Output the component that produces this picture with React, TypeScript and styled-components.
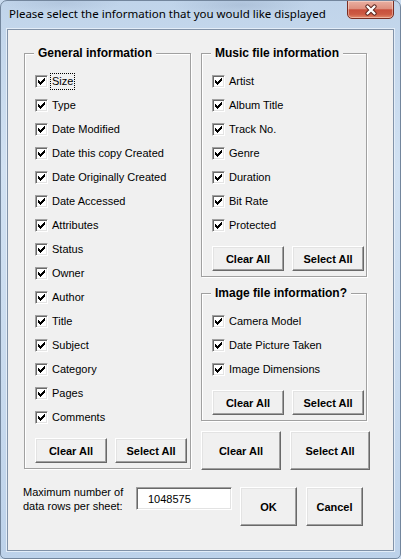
import React from "react";
import styled, { createGlobalStyle } from "styled-components";

const GlobalStyle = createGlobalStyle`
  html, body { margin: 0; padding: 0; }
  body { background: #c9dbef; width: 401px; height: 559px; overflow: hidden; }
  *, *::before, *::after { box-sizing: border-box; }
`;

const Window = styled.div`
  width: 401px;
  height: 559px;
  display: flex;
  flex-direction: column;
  padding: 0 6px 7px 6px;
  border: 1px solid #73869d;
  border-radius: 7px 7px 5px 5px;
  background:
    radial-gradient(ellipse 70px 12px at 240px 4px, rgba(140, 160, 188, 0.35), transparent),
    radial-gradient(ellipse 60px 10px at 60px 2px, rgba(140, 160, 188, 0.25), transparent),
    linear-gradient(180deg, #c0d4ea 0%, #d1e1f2 30%, #c8daee 70%, #bdd2ea 100%);
  font-family: "Liberation Sans", Arial, sans-serif;
  color: #000;
  overflow: hidden;
`;

const TitleBar = styled.div`
  height: 28px;
  display: flex;
  align-items: flex-start;
  justify-content: space-between;
`;

const TitleText = styled.div`
  font-family: "Noto Sans", "Liberation Sans", sans-serif;
  font-size: 11.5px;
  line-height: 16px;
  padding: 5px 0 0 2px;
  white-space: nowrap;
`;

const CloseButton = styled.div`
  width: 47px;
  height: 19px;
  margin-top: -1px;
  border: 1px solid #7a2d22;
  border-radius: 0 0 5px 5px;
  background: linear-gradient(180deg, #eab0a2 0%, #de907f 45%, #c84f3c 52%, #cc5a43 78%, #e38a6c 100%);
  box-shadow: inset 0 0 0 1px rgba(255, 235, 225, 0.45);
  display: flex;
  align-items: center;
  justify-content: center;
`;

const Client = styled.div`
  flex: 1;
  background: #f0f0f0;
  border: 1px solid #8293a9;
  box-shadow: 0 0 0 1px #e3edf8;
  padding: 16px 0 0 16px;
  display: flex;
  flex-direction: column;
`;

const Columns = styled.div`
  display: grid;
  grid-template-columns: 167px 166px;
  column-gap: 10px;
  align-items: start;
`;

const RightColumn = styled.div`
  display: flex;
  flex-direction: column;
`;

const Group = styled.fieldset<{ $gapTop?: number }>`
  margin: ${(p) => p.$gapTop ?? 0}px 0 0 0;
  min-width: 0;
  padding: 9px 2px 5px 10px;
  border: 1px solid #a0a0a0;
  box-shadow: inset 1px 1px 0 #ffffff, 1px 1px 0 #ffffff;
`;

const Legend = styled.legend`
  padding: 0 4px;
  margin-left: -1px;
  font-size: 12px;
  font-weight: bold;
  line-height: 14px;
  background: #f0f0f0;
`;

const Row = styled.div`
  height: 24px;
  display: flex;
  align-items: center;
  gap: 2px;
  font-size: 11px;
`;

const Box = styled.span`
  width: 13px;
  height: 13px;
  flex: none;
  background: #fff;
  border: 1px solid;
  border-color: #a0a0a0 #ffffff #ffffff #a0a0a0;
  box-shadow: inset 1px 1px 0 #696969, inset -1px -1px 0 #e3e3e3;
  display: flex;
  align-items: center;
  justify-content: center;
`;

const LabelText = styled.span<{ $focused?: boolean }>`
  padding: 1px 1px;
  line-height: 13px;
  border: 1px ${(p) => (p.$focused ? "dotted #000" : "solid transparent")};
  white-space: nowrap;
`;

const ButtonRow = styled.div<{ $gap: number; $top: number }>`
  display: flex;
  gap: ${(p) => p.$gap}px;
  margin-top: ${(p) => p.$top}px;
`;

const PushButton = styled.div<{ $w: number; $h: number }>`
  width: ${(p) => p.$w}px;
  height: ${(p) => p.$h}px;
  flex: none;
  background: #f0f0f0;
  border: 1px solid;
  border-color: #ffffff #696969 #696969 #ffffff;
  box-shadow: inset -1px -1px 0 #a0a0a0, inset 1px 1px 0 #e3e3e3;
  display: flex;
  align-items: center;
  justify-content: center;
  font-size: 11px;
  font-weight: bold;
  white-space: nowrap;
`;

const Footer = styled.div`
  display: flex;
  align-items: flex-start;
  margin: 17px 0 0 -1px;
`;

const FooterLabel = styled.div`
  width: 113px;
  flex: none;
  font-size: 11px;
  line-height: 14px;
  margin-top: -2px;
`;

const NumberField = styled.div`
  width: 96px;
  height: 23px;
  flex: none;
  margin-right: 8px;
  background: #fff;
  border: 1px solid;
  border-color: #a0a0a0 #ffffff #ffffff #a0a0a0;
  box-shadow: inset 1px 1px 0 #696969, inset -1px -1px 0 #e3e3e3;
  padding: 0 0 0 11px;
  display: flex;
  align-items: center;
  font-size: 11px;
`;

const CheckMark = () => (
  <svg width="7" height="7" viewBox="0 0 7 7" shapeRendering="crispEdges">
    <path
      d="M6 0h1v3h-1v1h-1v1h-1v1h-1v1h-1v-1h-1v-1h-1v-3h1v1h1v1h1v-1h1v-1h1v-1h1z"
      fill="#000"
    />
  </svg>
);

const CloseGlyph = () => (
  <svg width="14" height="12" viewBox="0 0 14 12">
    <path d="M3.5 2.5 L10.5 9.5 M10.5 2.5 L3.5 9.5" stroke="#5a221a" strokeWidth="4.2" strokeLinecap="round" fill="none" />
    <path d="M3.5 2.5 L10.5 9.5 M10.5 2.5 L3.5 9.5" stroke="#ffffff" strokeWidth="2.4" strokeLinecap="round" fill="none" />
  </svg>
);

type CheckProps = { label: string; focused?: boolean };

const CheckRow = ({ label, focused }: CheckProps) => (
  <Row>
    <Box>
      <CheckMark />
    </Box>
    <LabelText $focused={focused}>{label}</LabelText>
  </Row>
);

const general = [
  "Size",
  "Type",
  "Date Modified",
  "Date this copy Created",
  "Date Originally Created",
  "Date Accessed",
  "Attributes",
  "Status",
  "Owner",
  "Author",
  "Title",
  "Subject",
  "Category",
  "Pages",
  "Comments",
];

const music = ["Artist", "Album Title", "Track No.", "Genre", "Duration", "Bit Rate", "Protected"];

const image = ["Camera Model", "Date Picture Taken", "Image Dimensions"];

const GroupButtons = () => (
  <ButtonRow $gap={8} $top={9}>
    <PushButton $w={72} $h={25}>Clear All</PushButton>
    <PushButton $w={72} $h={25}>Select All</PushButton>
  </ButtonRow>
);

export default function App() {
  return (
    <>
      <GlobalStyle />
      <Window>
        <TitleBar>
          <TitleText>Please select the information that you would like displayed</TitleText>
          <CloseButton>
            <CloseGlyph />
          </CloseButton>
        </TitleBar>
        <Client>
          <Columns>
            <Group>
              <Legend>General information</Legend>
              {general.map((g, i) => (
                <CheckRow key={g} label={g} focused={i === 0} />
              ))}
              <GroupButtons />
            </Group>
            <RightColumn>
              <Group>
                <Legend>Music file information</Legend>
                {music.map((m) => (
                  <CheckRow key={m} label={m} />
                ))}
                <GroupButtons />
              </Group>
              <Group $gapTop={9}>
                <Legend>Image file information?</Legend>
                {image.map((m) => (
                  <CheckRow key={m} label={m} />
                ))}
                <GroupButtons />
              </Group>
              <ButtonRow $gap={9} $top={10}>
                <PushButton $w={80} $h={39}>Clear All</PushButton>
                <PushButton $w={80} $h={39}>Select All</PushButton>
              </ButtonRow>
            </RightColumn>
          </Columns>
          <Footer>
            <FooterLabel>
              Maximum number of
              <br />
              data rows per sheet:
            </FooterLabel>
            <NumberField>1048575</NumberField>
            <ButtonRow $gap={9} $top={0}>
              <PushButton $w={57} $h={39}>OK</PushButton>
              <PushButton $w={57} $h={39}>Cancel</PushButton>
            </ButtonRow>
          </Footer>
        </Client>
      </Window>
    </>
  );
}
